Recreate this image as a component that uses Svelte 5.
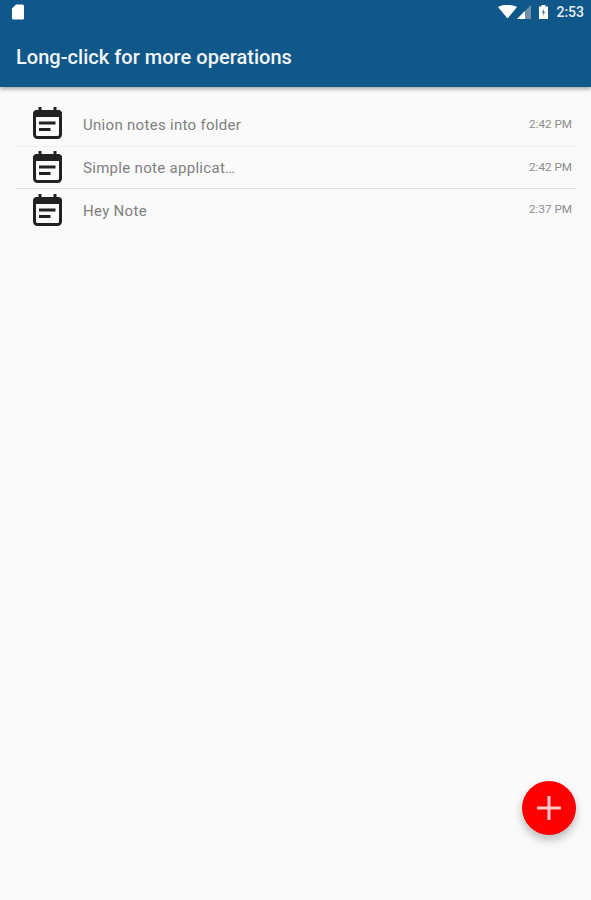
<script lang="ts">
  const notes = [
    { title: "Union notes into folder", time: "2:42 PM" },
    { title: "Simple note applicat…", time: "2:42 PM" },
    { title: "Hey Note", time: "2:37 PM" },
  ];
</script>

<main>
  <header>
    <div class="status">
      <svg class="sd" width="14" height="16" viewBox="0 0 14 16">
        <path d="M5 .5h6.500A1.500 1.500 0 0 1 13 2v12a1.500 1.500 0 0 1-1.500 1.500h-9A1.500 1.500 0 0 1 1 14V4.500z" fill="#fff" />
      </svg>
      <div class="right">
        <svg width="19" height="14" viewBox="0 0 19 14">
          <path d="M0 2C3 .3 6 0 9.500 0s6.500.3 9.500 2L9.500 13.500z" fill="#fff" />
        </svg>
        <svg class="signal" width="14" height="14" viewBox="0 0 14 14">
          <path d="M14 0V14H0z" fill="#6f8fac" />
          <path d="M8 6V14H0z" fill="#fff" />
        </svg>
        <svg class="battery" width="9" height="14" viewBox="0 0 9 14">
          <path d="M2.500 0h4v1.500H9V14H0V1.500h2.500z" fill="#fff" />
          <path d="M5 3.500 3 7.800h1.500L4 11l2-4.300H4.500z" fill="#10578a" />
        </svg>
        <span class="clock">2:53</span>
      </div>
    </div>
    <h1>Long-click for more operations</h1>
  </header>

  <ul>
    {#each notes as note, i}
      <li class:ruled={i > 0} class:strong={i == 2}>
        <svg class="icon" width="29" height="32" viewBox="0 0 29 32">
          <rect x="1.500" y="4.500" width="26" height="26" rx="3" fill="none" stroke="#212121" stroke-width="3" />
          <path d="M0 7a4 4 0 0 1 4-4h21a4 4 0 0 1 4 4v3H0z" fill="#212121" />
          <path d="M7 0v5M22 0v5" stroke="#212121" stroke-width="3" />
          <path d="M6 14.500h16.500v3H6zM6 21h11.500v3H6z" fill="#212121" />
        </svg>
        <span class="title">{note.title}</span>
        <span class="time">{note.time}</span>
      </li>
    {/each}
  </ul>

  <button class="fab" aria-label="Add note">
    <svg width="26" height="26" viewBox="0 0 26 26">
      <path d="M11.500 1h3v10.500H25v3H14.500V25h-3V14.500H1v-3h10.500z" fill="#ffc9c9" />
    </svg>
  </button>
</main>

<style>
  :global(body) {
    background: #fafafa;
  }
  main {
    position: relative;
    height: 900px;
    overflow: hidden;
    background: #fafafa;
    font-family: Roboto, "Liberation Sans", sans-serif;
  }
  header {
    height: 87px;
    box-sizing: border-box;
    background: #10578a;
    color: #fff;
    box-shadow: 0 2px 4px rgba(0, 0, 0, 0.35);
  }
  .status {
    display: flex;
    justify-content: space-between;
    align-items: center;
    height: 24px;
    padding: 0 7px 0 11px;
  }
  .right {
    display: flex;
    align-items: center;
  }
  .battery {
    margin-left: 8px;
  }
  .clock {
    margin-left: 8px;
    font-size: 14px;
    font-weight: 500;
    color: #e6edf3;
  }
  h1 {
    margin: 0;
    padding: 21px 0 0 16px;
    font-size: 20px;
    line-height: 24px;
    font-weight: 500;
    letter-spacing: 0.03px;
    color: #f2f6f9;
  }
  ul {
    list-style: none;
    margin: 0;
    padding: 16px 15px 0 16px;
  }
  li {
    display: flex;
    align-items: center;
    height: 43px;
    box-sizing: border-box;
    color: #808080;
  }
  li.ruled {
    border-top: 1px solid #f0f0f0;
  }
  li.strong {
    height: 42px;
    margin-top: -1px;
    border-top-color: #dedede;
  }
  .icon {
    flex: none;
    margin: -4px 0 0 17px;
  }
  li.ruled .icon {
    margin-top: -2px;
  }
  li.strong .icon {
    margin-top: 0;
  }
  .title {
    flex: 1;
    margin-left: 21px;
    font-size: 15px;
    letter-spacing: 0.3px;
  }
  li.strong .title {
    padding-top: 2px;
  }
  .time {
    margin: -2px 4px 0 0;
    font-size: 11.700px;
    color: #8c8c8c;
  }
  .fab {
    position: absolute;
    left: 522px;
    top: 781px;
    width: 54px;
    height: 54px;
    display: flex;
    align-items: center;
    justify-content: center;
    padding: 0;
    border: none;
    border-radius: 50%;
    background: #fe0000;
    box-shadow: 0 5px 10px rgba(0, 0, 0, 0.25);
  }
</style>
